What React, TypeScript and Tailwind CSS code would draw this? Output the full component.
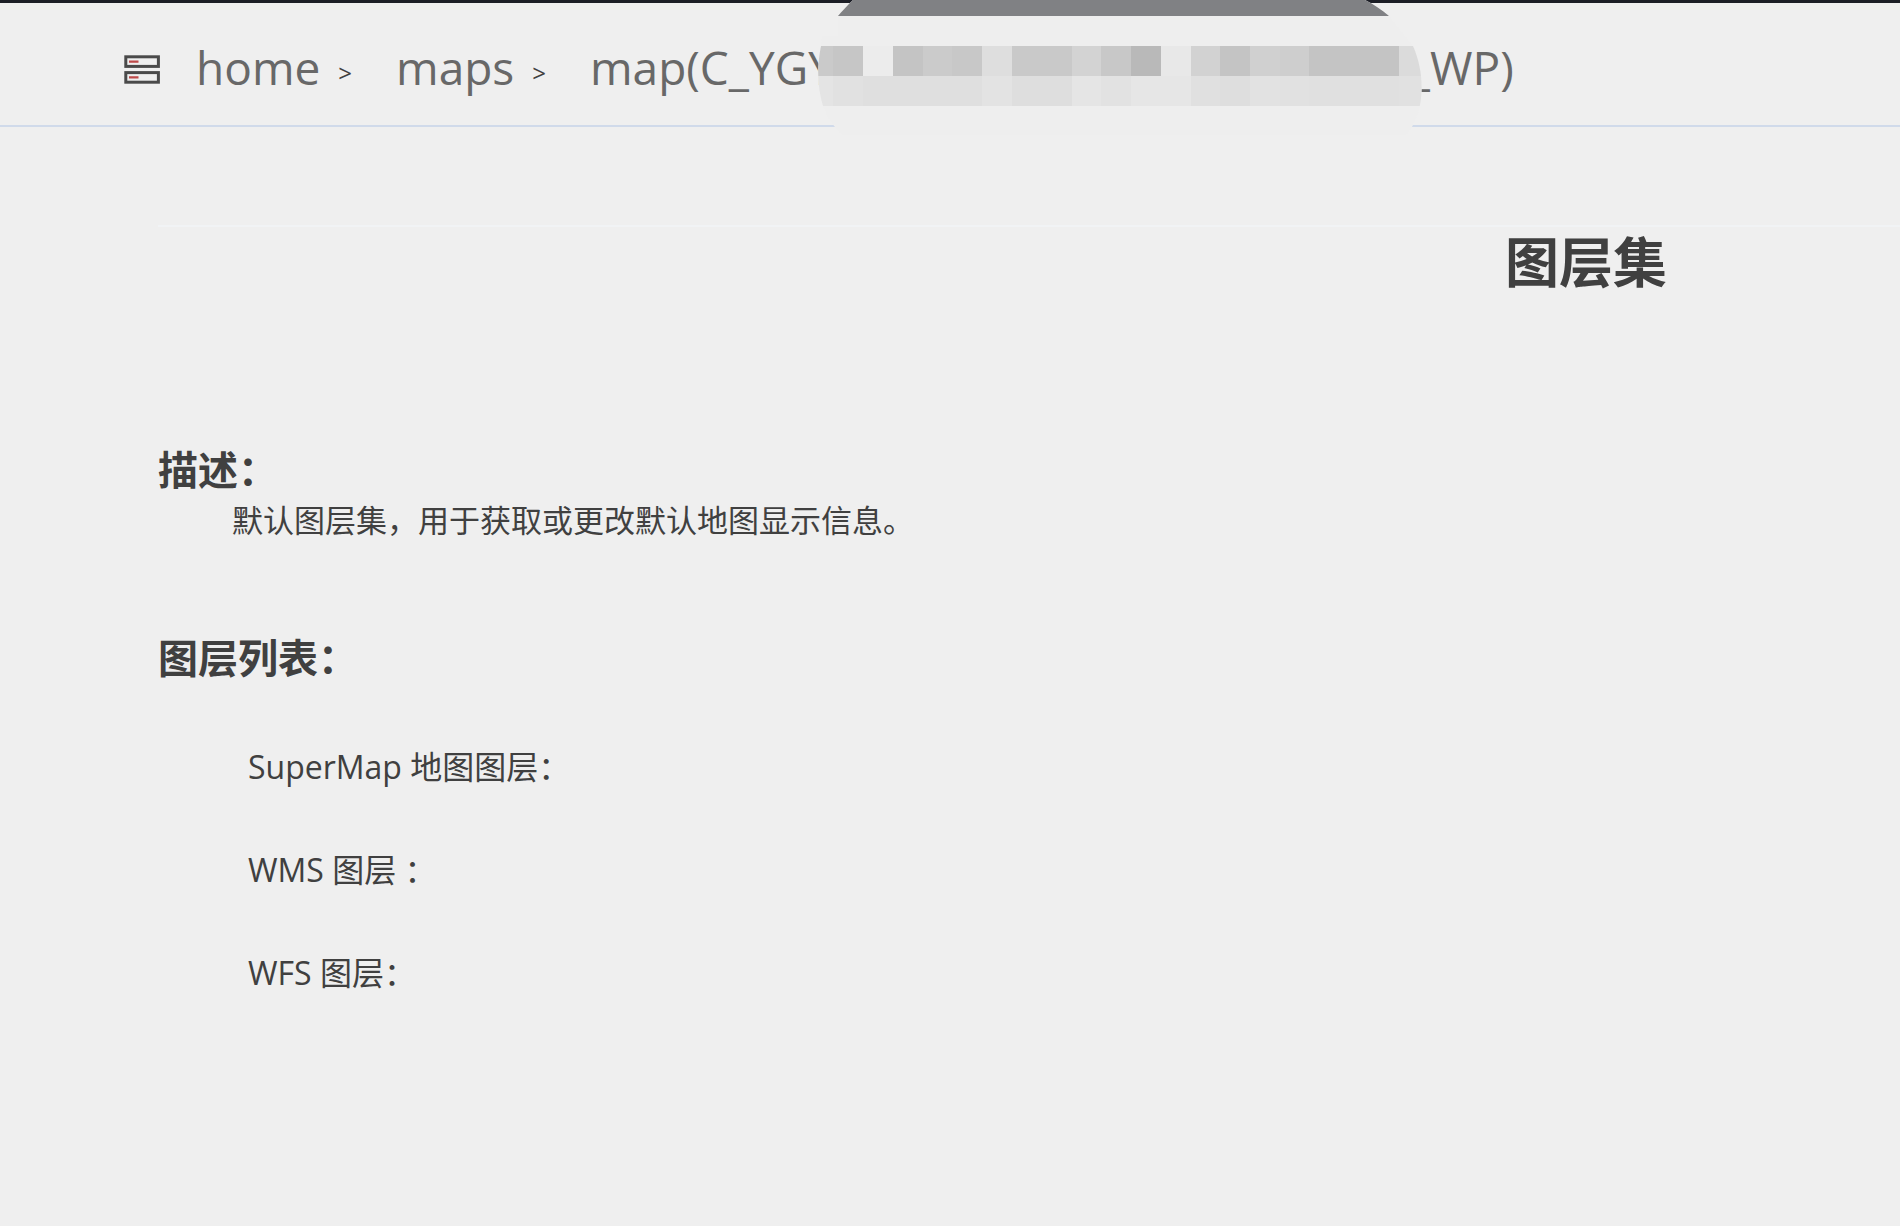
const layers = ["SuperMap 地图图层：", "WMS 图层 ：", "WFS 图层："];

// x, width, upper color, lower color
const tiles: [number, number, string, string][] = [
  [0, 15, "#cacaca", "#e4e4e4"],
  [15, 30, "#c6c6c6", "#e1e1e1"],
  [45, 30, "#ececec", "#dfdfdf"],
  [75, 30, "#c4c4c4", "#dfdfdf"],
  [105, 29, "#cbcbcb", "#dfdfdf"],
  [134, 30, "#c8c8c8", "#dfdfdf"],
  [164, 30, "#dedede", "#e3e3e3"],
  [194, 60, "#c9c9c9", "#dedede"],
  [254, 29, "#d3d3d3", "#e5e5e5"],
  [283, 30, "#c8c8c8", "#e2e2e2"],
  [313, 30, "#b9b9b9", "#e6e6e6"],
  [343, 30, "#e8e8e8", "#e6e6e6"],
  [373, 29, "#d2d2d2", "#e0e0e0"],
  [402, 30, "#c4c4c4", "#dedede"],
  [432, 30, "#d0d0d0", "#e2e2e2"],
  [462, 29, "#cecece", "#e1e1e1"],
  [491, 90, "#c4c4c4", "#e0e0e0"],
  [581, 23, "#dbdbdb", "#e1e1e1"],
];

function ServerIcon() {
  return (
    <svg className="mt-1.5 shrink-0" width="36" height="30" viewBox="0 0 36 30" aria-hidden="true">
      <g fill="none" stroke="#4a4a4a" strokeWidth="3">
        <rect x="1.8" y="1.8" width="32.6" height="9.6" />
        <rect x="1.8" y="17.6" width="32.6" height="9.6" />
      </g>
      <path d="M5 6.6h9.5M5 22.4h9.5" stroke="#bf4a4a" strokeWidth="2.2" />
    </svg>
  );
}

function Mosaic() {
  return (
    <svg
      className="relative z-10 -mt-1.5 -mr-3 -ml-4 shrink-0 self-start overflow-visible"
      width="604"
      height="120"
      viewBox="0 3 604 120"
      aria-hidden="true"
    >
      <clipPath id="blob">
        <path d="M35 0C29 6 24 11 20 16V36H4L3 46C-1 66-1 86 5 106C8 115 12 121 17 127L24 135H588L594 127C598 119 602 110 603 98C605 80 602 62 595 46L571 16C564 10 555 4 547 0Z" />
      </clipPath>
      <g clipPath="url(#blob)">
        <rect width="604" height="140" fill="#eeeeee" />
        <rect width="604" height="16" fill="#808184" />
        <g shapeRendering="crispEdges">
          {tiles.map(([x, w, top, bottom]) => (
            <g key={x}>
              <rect x={x} y="46" width={w} height="30" fill={top} />
              <rect x={x} y="76" width={w} height="30" fill={bottom} />
            </g>
          ))}
        </g>
      </g>
    </svg>
  );
}

function Breadcrumb() {
  return (
    <nav className="flex h-[127px] items-center border-t-[3px] border-b-2 border-t-[#1c1e26] border-b-[#d0daea] pt-1.5 pl-[124px] text-[46px] text-[#686868]">
      <ServerIcon />
      <a href="#home" className="ml-9">
        home
      </a>
      <span className="mt-3 ml-[18px] text-2xl text-[#404040]">&gt;</span>
      <a href="#maps" className="ml-11">
        maps
      </a>
      <span className="mt-3 ml-[18px] text-2xl text-[#404040]">&gt;</span>
      <a href="#map" className="ml-11 flex h-full items-center">
        <span>map(C_YGY</span>
        <Mosaic />
        <span>_WP)</span>
      </a>
    </nav>
  );
}

export default function App() {
  return (
    <div
      lang="zh-CN"
      className="min-h-screen overflow-x-hidden bg-[#efefef] font-['Open_Sans','Noto_Sans_CJK_SC',sans-serif] text-[#404040]"
    >
      <Breadcrumb />
      <main className="ml-[158px] pt-[98px]">
        <div className="border-t-2 border-[#f1f3f5]">
          <h1 className="pr-[233px] text-right text-[54px] leading-[70px] font-bold">图层集</h1>
        </div>
        <section className="mt-[147px]">
          <h2 className="text-[40px] leading-[52px] font-bold">描述：</h2>
          <p className="pl-[74px] text-[31px] leading-[48px]">
            默认图层集，用于获取或更改默认地图显示信息。
          </p>
        </section>
        <section className="mt-[88px]">
          <h2 className="text-[40px] leading-[52px] font-bold">图层列表：</h2>
          <ul className="mt-[59px] space-y-[55px] pl-[90px] text-[32px] leading-[48px]">
            {layers.map((name) => (
              <li key={name}>{name}</li>
            ))}
          </ul>
        </section>
      </main>
    </div>
  );
}
